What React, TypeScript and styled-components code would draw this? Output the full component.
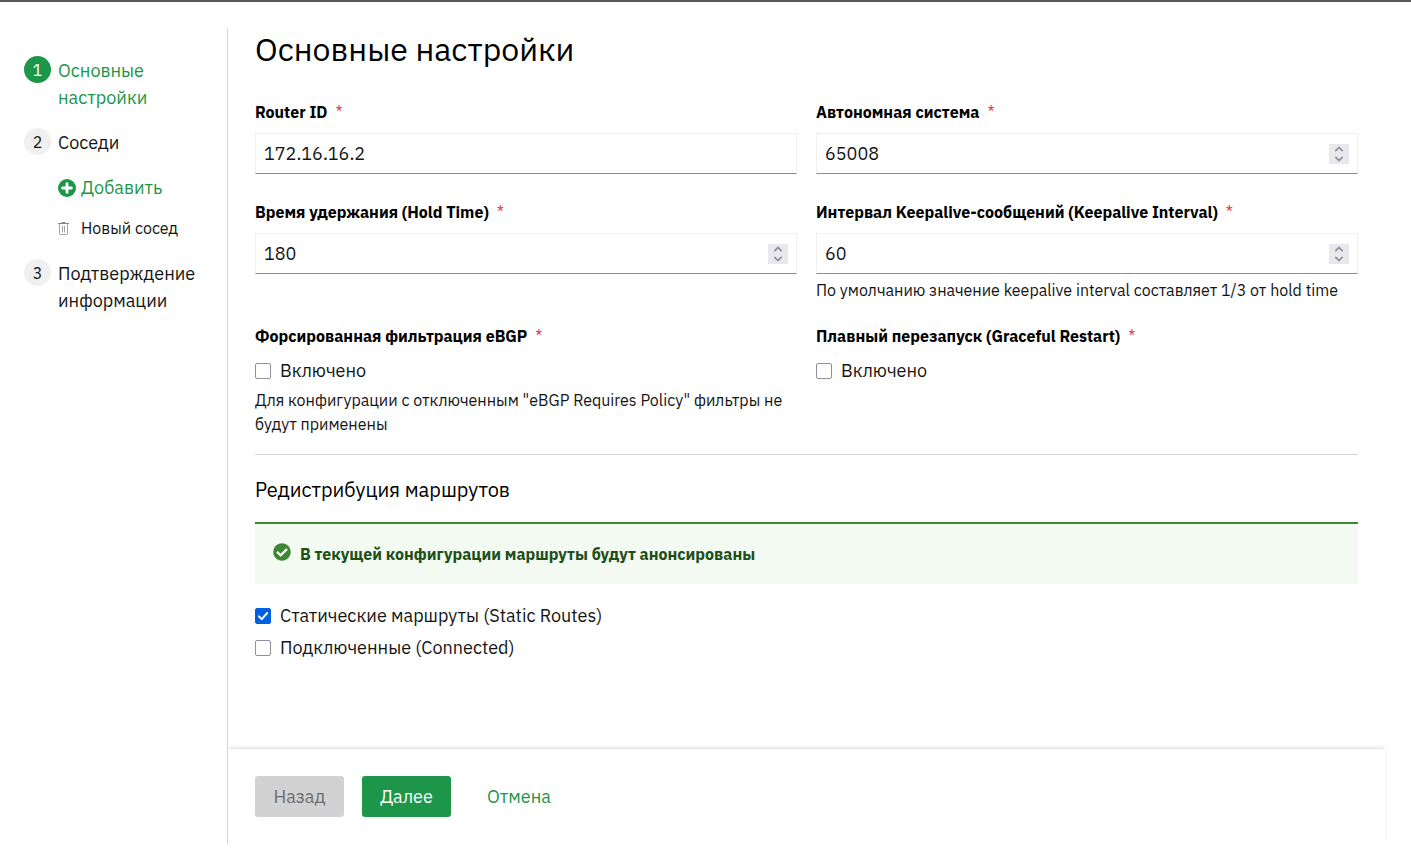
import React, { useId, useState } from "react";
import styled, { createGlobalStyle } from "styled-components";

const GlobalStyle = createGlobalStyle`
  *, *::before, *::after { box-sizing: border-box; }
  body {
    margin: 0;
    background: #ffffff;
    color: #151515;
    font-family: "IBM Plex Sans", "Noto Sans", sans-serif;
    font-size: 18px;
    line-height: 27px;
  }
  h1, h2, p, ol, ul { margin: 0; padding: 0; font-weight: 400; }
  ol, ul { list-style: none; }
  button, input { font: inherit; color: inherit; }
`;

const green = "#1e9649";

const Page = styled.div`
  display: flex;
  flex-direction: column;
  min-height: 100vh;
  padding: 27px 26px 11px 0;
  border-top: 2px solid #58585a;
`;

const Wizard = styled.div`
  display: flex;
  flex: 1;
`;

const Sidebar = styled.nav`
  flex: 0 0 228px;
  padding: 27px 27px 27px 24px;
  border-right: 1px solid #d2d2d2;
`;

const Steps = styled.ol`
  display: flex;
  flex-direction: column;
  gap: 17px;
`;

const StepLink = styled.a<{ $current?: boolean }>`
  display: grid;
  grid-template-columns: 27px 1fr;
  column-gap: 7px;
  color: ${(p) => (p.$current ? green : "#151515")};
  text-decoration: none;
`;

const StepName = styled.span`
  padding-top: 1px;
`;

const StepNumber = styled.span<{ $current?: boolean }>`
  width: 27px;
  height: 27px;
  border-radius: 50%;
  background: ${(p) => (p.$current ? green : "#f0f0f0")};
  color: ${(p) => (p.$current ? "#ffffff" : "#151515")};
  font-size: 16px;
  line-height: 28px;
  text-align: center;
`;

const SubSteps = styled.ul`
  display: flex;
  flex-direction: column;
  gap: 15px;
  padding: 18px 0 2px 34px;
`;

const SubItem = styled.li`
  display: grid;
  grid-template-columns: 18px auto;
  column-gap: 5px;
  align-items: center;
  justify-content: start;
`;

const AddButton = styled.button`
  display: grid;
  grid-template-columns: 18px auto;
  column-gap: 5px;
  align-items: center;
  padding: 0;
  border: 0;
  background: none;
  color: ${green};
  cursor: pointer;
`;

const DeleteButton = styled.button`
  display: flex;
  padding: 0;
  border: 0;
  background: none;
  color: #84868c;
  cursor: pointer;
`;

const SubLink = styled.a`
  color: #151515;
  font-size: 16px;
  line-height: 24px;
  text-decoration: none;
  white-space: nowrap;
`;

const Content = styled.div`
  display: flex;
  flex: 1;
  flex-direction: column;
  min-width: 0;
`;

const Main = styled.main`
  flex: 1;
  padding: 0 27px 27px;
`;

const Title = styled.h1`
  color: #000000;
  font-size: 32px;
  line-height: 41px;
`;

const Fields = styled.div`
  display: grid;
  grid-template-columns: 1fr 1fr;
  gap: 22px 19px;
  padding: 30px 0 18px;
`;

const Field = styled.div`
  min-width: 0;
`;

const Label = styled.label`
  display: block;
  margin-bottom: 9px;
  color: #000000;
  font-size: 16px;
  font-weight: 700;
  line-height: 24px;
`;

const GroupLabel = styled(Label).attrs({ as: "div" })``;

const Required = styled.span`
  margin-left: 8px;
  color: #e8344e;
  font-weight: 400;
`;

const Control = styled.div`
  display: flex;
  align-items: center;
  height: 41px;
  margin-bottom: 4px;
  padding: 0 8px;
  border: 1px solid #f0f0f0;
  border-bottom-color: #8a8d90;
`;

const TextInput = styled.input`
  flex: 1;
  min-width: 0;
  height: 39px;
  padding: 0;
  border: 0;
  outline: 0;
  background: none;
  appearance: textfield;
  &::-webkit-inner-spin-button { display: none; }
`;

const Spinner = styled.span`
  display: grid;
  grid-template-rows: 10px 10px;
  width: 20px;
  background: #e9e9ed;
`;

const SpinButton = styled.button`
  display: grid;
  place-items: center;
  padding: 0;
  border: 0;
  background: none;
  color: #8f8f9d;
`;

const Help = styled.p`
  font-size: 16px;
  line-height: 24px;
`;

const CheckLabel = styled.label`
  display: grid;
  grid-template-columns: 16px auto;
  column-gap: 9px;
  align-items: center;
  justify-content: start;
`;

const CheckMark = styled.span`
  display: grid;
  > * { grid-area: 1 / 1; }
  > svg { pointer-events: none; }
`;

const CheckInput = styled.input`
  width: 16px;
  height: 16px;
  margin: 0;
  border: 1px solid #8f8f9d;
  border-radius: 2px;
  background: #ffffff;
  appearance: none;
  &:checked { border-color: #0060df; background: #0060df; }
`;

const FieldChecks = styled.div`
  margin-bottom: 4px;
`;

const Section = styled.section`
  border-top: 1px solid #d2d2d2;
`;

const SectionTitle = styled.h2`
  padding: 20px 0 18px;
  color: #000000;
  font-size: 20px;
  line-height: 29px;
`;

const Alert = styled.div`
  display: grid;
  grid-template-columns: 18px 1fr;
  column-gap: 9px;
  padding: 18px;
  border-top: 2px solid #3e8635;
  background: #f3faf2;
  > svg { margin-top: 1px; }
`;

const AlertTitle = styled.p`
  color: #1e4f18;
  font-size: 16px;
  font-weight: 700;
  line-height: 24px;
`;

const CheckList = styled.div`
  display: flex;
  flex-direction: column;
  gap: 5px;
  padding-top: 18px;
`;

const Footer = styled.footer`
  display: flex;
  padding: 27px;
  background: #ffffff;
  box-shadow: 0 -2px 4px -1px rgba(3, 3, 3, 0.16);
  clip-path: inset(-6px -6px 0 0);
`;

const Button = styled.button<{ $kind: "primary" | "disabled" | "link" }>`
  height: 41px;
  min-width: 89px;
  margin-right: 18px;
  padding: 0 18px;
  border: 0;
  border-radius: 3px;
  background: ${(p) => ({ primary: green, disabled: "#d2d2d2", link: "none" })[p.$kind]};
  color: ${(p) => ({ primary: "#ffffff", disabled: "#6a6e73", link: green })[p.$kind]};
`;

const PlusIcon = () => (
  <svg width="18" height="18" viewBox="0 0 18 18" aria-hidden="true">
    <circle cx="9" cy="9" r="9" fill="currentColor" />
    <path d="M9 4.6v8.8M4.6 9h8.8" stroke="#fff" strokeWidth="2.8" strokeLinecap="round" />
  </svg>
);

const TrashIcon = () => (
  <svg width="11" height="13" viewBox="0 0 11 13" fill="none" stroke="currentColor" aria-hidden="true">
    <path d="M0 1.5h11M3.5 .5h4" />
    <path d="M1.5 2v9.5q0 1 1 1h6q1 0 1-1V2M4.5 4v6.5M6.5 4v6.5" strokeOpacity=".75" />
  </svg>
);

const SuccessIcon = () => (
  <svg width="18" height="18" viewBox="0 0 512 512" aria-hidden="true">
    <path
      fill="#3e8635"
      d="M504 256c0 136.967-111.033 248-248 248S8 392.967 8 256 119.033 8 256 8s248 111.033 248 248zM227.314 387.314l184-184c6.248-6.248 6.248-16.379 0-22.627l-22.627-22.627c-6.248-6.249-16.379-6.249-22.628 0L216 308.118l-70.059-70.059c-6.248-6.248-16.379-6.248-22.628 0l-22.627 22.627c-6.248 6.248-6.248 16.379 0 22.627l104 104c6.249 6.249 16.379 6.249 22.628.001z"
    />
  </svg>
);

const Chevron = ({ up }: { up?: boolean }) => (
  <svg width="10" height="6" viewBox="0 0 10 6" fill="none" stroke="currentColor" strokeWidth="1.8" strokeLinecap="round" aria-hidden="true">
    <path d={up ? "M1.8 4.6 5 1.4l3.2 3.2" : "M1.8 1.4 5 4.6l3.2-3.2"} />
  </svg>
);

const Star = () => <Required aria-hidden="true">*</Required>;

function InputField(props: { label: string; initial: string; numeric?: boolean; help?: string }) {
  const id = useId();
  const [value, setValue] = useState(props.initial);
  const step = (by: number) => setValue(String(Number(value) + by));
  return (
    <Field>
      <Label htmlFor={id}>
        {props.label}
        <Star />
      </Label>
      <Control>
        <TextInput
          id={id}
          type={props.numeric ? "number" : "text"}
          value={value}
          required
          onChange={(e) => setValue(e.target.value)}
        />
        {props.numeric && (
          <Spinner>
            <SpinButton type="button" aria-label="Увеличить" onClick={() => step(1)}>
              <Chevron up />
            </SpinButton>
            <SpinButton type="button" aria-label="Уменьшить" onClick={() => step(-1)}>
              <Chevron />
            </SpinButton>
          </Spinner>
        )}
      </Control>
      {props.help && <Help>{props.help}</Help>}
    </Field>
  );
}

function Checkbox({ label, initial = false }: { label: string; initial?: boolean }) {
  const [checked, setChecked] = useState(initial);
  return (
    <CheckLabel>
      <CheckMark>
        <CheckInput type="checkbox" checked={checked} onChange={(e) => setChecked(e.target.checked)} />
        {checked && (
          <svg width="16" height="16" viewBox="0 0 16 16" fill="none" stroke="#fff" strokeWidth="2" strokeLinecap="round" strokeLinejoin="round" aria-hidden="true">
            <path d="M4 8.4 6.8 11.2 12.2 5" />
          </svg>
        )}
      </CheckMark>
      {label}
    </CheckLabel>
  );
}

export default function App() {
  return (
    <Page>
      <GlobalStyle />
      <Wizard>
        <Sidebar>
          <Steps>
            <li>
              <StepLink href="#settings" $current aria-current="step">
                <StepNumber $current>1</StepNumber>
                <StepName>Основные настройки</StepName>
              </StepLink>
            </li>
            <li>
              <StepLink href="#neighbors">
                <StepNumber>2</StepNumber>
                <StepName>Соседи</StepName>
              </StepLink>
              <SubSteps>
                <li>
                  <AddButton type="button">
                    <PlusIcon />
                    Добавить
                  </AddButton>
                </li>
                <SubItem>
                  <DeleteButton type="button" aria-label="Удалить">
                    <TrashIcon />
                  </DeleteButton>
                  <SubLink href="#new">Новый сосед</SubLink>
                </SubItem>
              </SubSteps>
            </li>
            <li>
              <StepLink href="#confirm">
                <StepNumber>3</StepNumber>
                <StepName>Подтверждение информации</StepName>
              </StepLink>
            </li>
          </Steps>
        </Sidebar>
        <Content>
          <Main>
            <Title>Основные настройки</Title>
            <Fields>
              <InputField label="Router ID" initial="172.16.16.2" />
              <InputField label="Автономная система" initial="65008" numeric />
              <InputField label="Время удержания (Hold Time)" initial="180" numeric />
              <InputField
                label="Интервал Keepalive-сообщений (Keepalive Interval)"
                initial="60"
                numeric
                help="По умолчанию значение keepalive interval составляет 1/3 от hold time"
              />
              <Field>
                <GroupLabel>
                  Форсированная фильтрация eBGP
                  <Star />
                </GroupLabel>
                <FieldChecks>
                  <Checkbox label="Включено" />
                </FieldChecks>
                <Help>Для конфигурации с отключенным "eBGP Requires Policy" фильтры не будут применены</Help>
              </Field>
              <Field>
                <GroupLabel>
                  Плавный перезапуск (Graceful Restart)
                  <Star />
                </GroupLabel>
                <Checkbox label="Включено" />
              </Field>
            </Fields>
            <Section>
              <SectionTitle>Редистрибуция маршрутов</SectionTitle>
              <Alert>
                <SuccessIcon />
                <AlertTitle>В текущей конфигурации маршруты будут анонсированы</AlertTitle>
              </Alert>
              <CheckList>
                <Checkbox label="Статические маршруты (Static Routes)" initial />
                <Checkbox label="Подключенные (Connected)" />
              </CheckList>
            </Section>
          </Main>
          <Footer>
            <Button type="button" $kind="disabled" disabled>Назад</Button>
            <Button type="button" $kind="primary">Далее</Button>
            <Button type="button" $kind="link">Отмена</Button>
          </Footer>
        </Content>
      </Wizard>
    </Page>
  );
}
